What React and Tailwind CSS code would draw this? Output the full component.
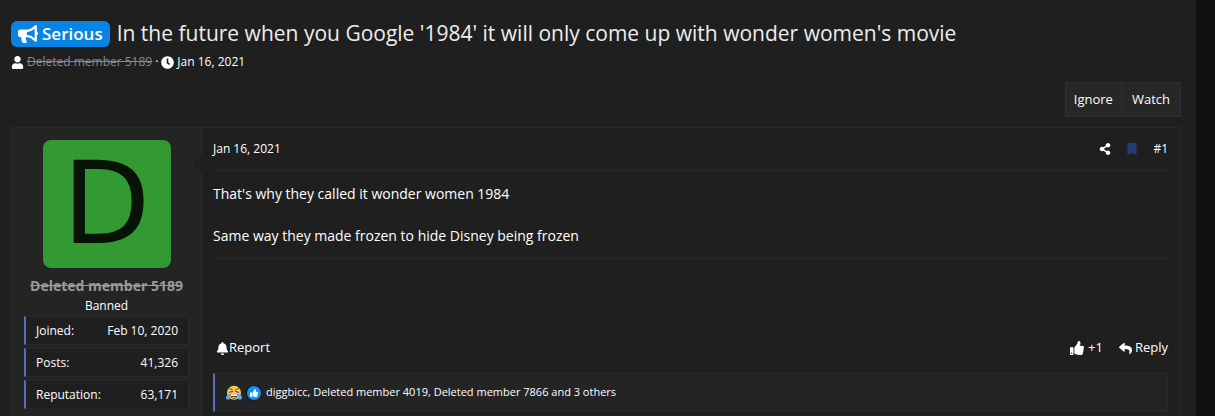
import React, { useState } from 'react';
import {
    FaBell,
    FaBookmark,
    FaBullhorn,
    FaClock,
    FaReply,
    FaShareAlt,
    FaThumbsUp,
    FaUser,
} from 'react-icons/fa';

const thread = {
    prefix: 'Serious',
    title: "In the future when you Google '1984' it will only come up with wonder women's movie",
    author: 'Deleted member 5189',
    date: 'Jan 16, 2021',
};

const userStats = [
    { label: 'Joined:', value: 'Feb 10, 2020' },
    { label: 'Posts:', value: '41,326' },
    { label: 'Reputation:', value: '63,171' },
];

const paragraphs = [
    "That's why they called it wonder women 1984",
    'Same way they made frozen to hide Disney being frozen',
];

function LaughEmoji() {
    return (
        <svg viewBox="0 0 32 32" className="size-4" role="img" aria-label="Haha">
            <circle cx="16" cy="15.500" r="14" fill="#f7c653" />
            <path d="M7 7l6 3M25 7l-6 3" stroke="#7a5120" strokeWidth="2" strokeLinecap="round" />
            <path d="M7 14.500l6-1.500M25 14.500l-6-1.500" stroke="#6b4518" strokeWidth="2.4" strokeLinecap="round" />
            <path d="M9 18h14c0 7-3 10-7 10s-7-3-7-10z" fill="#4a2f1c" />
            <path d="M10 18.500h12v3.500H10z" fill="#fff" />
            <path d="M12 25.500h8" stroke="#f3e6d8" strokeWidth="2" />
            <path d="M8 17c-5 2-8 5-8 8 0 5 7 6 8 1z" fill="#5eb0ea" />
            <path d="M24 17c5 2 8 5 8 8 0 5-7 6-8 1z" fill="#5eb0ea" />
        </svg>
    );
}

function LikeEmoji() {
    return (
        <span className="flex size-4 items-center justify-center rounded-full border border-[#06131f] bg-[#1593ec]" role="img" aria-label="Like">
            <FaThumbsUp className="size-2 text-white" />
        </span>
    );
}

function UserPanel() {
    return (
        <aside className="relative w-[190px] shrink-0 border-r border-[#2a2a2a] bg-[#242424] px-3 pt-3 pb-2">
            {/* Arrow pointing at the user */}
            <svg viewBox="0 0 11 22" className="absolute top-[25px] -right-px h-[22px] w-[11px]" aria-hidden="true">
                <path d="M11 0L0 11l11 11z" fill="#1f1f1f" />
                <path d="M11 0L0 11l11 11" fill="none" stroke="#2a2a2a" />
            </svg>
            <a href="#member" aria-label={thread.author} className="mx-auto flex size-32 items-center justify-center rounded-lg bg-[#339933] font-['DejaVu_Sans',sans-serif] text-[114px] leading-none text-[#061306]">
                D
            </a>
            <h4 className="mt-2 text-center text-[14px] leading-5 font-bold whitespace-nowrap text-[#999999]">
                <a href="#member" className="line-through">{thread.author}</a>
            </h4>
            <p className="text-center text-[12px] leading-5">Banned</p>
            <dl className="flex flex-col gap-[3px]">
                {userStats.map((stat) => (
                    <div key={stat.label} className="flex h-[29px] items-center justify-between border border-l-2 border-[#292929] border-l-[#5c6bc0] bg-[#1f1f1f] px-2.5 text-[12px]">
                        <dt>{stat.label}</dt>
                        <dd>{stat.value}</dd>
                    </div>
                ))}
            </dl>
        </aside>
    );
}

function Post() {
    const [liked, setLiked] = useState(false);

    return (
        <article className="mt-2.5 flex border border-b-0 border-[#292929]">
            <UserPanel />
            <div className="flex min-w-0 flex-1 flex-col pr-3 pb-1 pl-[11px]">
                <header className="flex h-[43px] items-center justify-between border-b border-[#292929] text-[12px]">
                    <a href="#post-1"><time>{thread.date}</time></a>
                    <div className="flex items-center gap-[15px]">
                        <a href="#share" aria-label="Share"><FaShareAlt className="size-3" /></a>
                        <a href="#bookmark" aria-label="Bookmark"><FaBookmark className="size-3 text-[#273c75]" /></a>
                        <a href="#post-1">#1</a>
                    </div>
                </header>
                <div className="flex flex-col gap-[21px] border-b border-[#292929] pt-3 pb-3 text-[14px] leading-[21px]">
                    {paragraphs.map((text) => <p key={text}>{text}</p>)}
                </div>
                <footer className="mt-auto">
                    <div className="flex h-6 items-center justify-between pl-[3px] text-[13px]">
                        <button type="button" className="flex items-center"><FaBell className="size-[13px]" />Report</button>
                        <div className="flex items-center gap-4">
                            <button type="button" aria-pressed={liked} onClick={() => setLiked(!liked)} className="flex items-center gap-1">
                                <FaThumbsUp className="size-3.5" />+1
                            </button>
                            <button type="button" className="flex items-center gap-[3px]"><FaReply className="size-[13px]" />Reply</button>
                        </div>
                    </div>
                    <div className="mt-[13px] mb-px flex h-[39px] items-center gap-1 border border-l-2 border-[#292929] border-l-[#5c6bc0] bg-[#242424] pl-[11px] text-[11px]">
                        <LaughEmoji />
                        <LikeEmoji />
                        <a href="#reactions">diggbicc, Deleted member 4019, Deleted member 7866 and 3 others</a>
                    </div>
                </footer>
            </div>
        </article>
    );
}

export default function App() {
    const [watching, setWatching] = useState(false);

    return (
        <div className="overflow-hidden bg-[#111111] pr-[19px] font-['Open_Sans','Noto_Sans',sans-serif] text-white">
            <main className="border-b border-[#151515] bg-[#1f1f1f] pt-5 pr-[15px] pl-[11px]">
                <h1 className="flex h-7 items-center gap-[7px] text-[21px] whitespace-nowrap text-[#ededed]">
                    <span className="flex h-[26px] items-center gap-1 rounded-md bg-[#0984e3] px-[7px] text-[17px] font-semibold text-white">
                        <FaBullhorn className="size-5" />
                        {thread.prefix}
                    </span>
                    {thread.title}
                </h1>
                <div className="mt-1 flex h-5 items-center gap-[3px] text-[12px]">
                    <FaUser className="size-[13px]" />
                    <a href="#member" className="text-[#8a8a8a] line-through">{thread.author}</a>
                    <span>·</span>
                    <FaClock className="size-[13px]" />
                    <time>{thread.date}</time>
                </div>
                <div className="mt-2.5 flex justify-end text-[13px]">
                    <button type="button" className="h-[35px] border border-[#303030] bg-[#272727] px-2">Ignore</button>
                    <button type="button" aria-pressed={watching} onClick={() => setWatching(!watching)} className="h-[35px] border border-l-0 border-[#303030] bg-[#272727] px-2.5">
                        Watch
                    </button>
                </div>
                <Post />
            </main>
        </div>
    );
}
